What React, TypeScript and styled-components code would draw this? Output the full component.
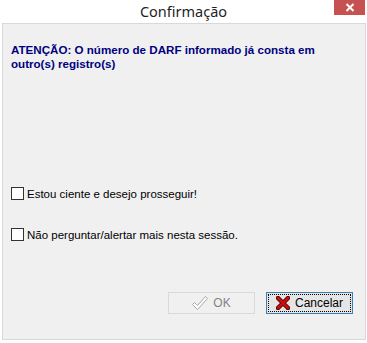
import React from "react"
import styled, { createGlobalStyle } from "styled-components"

const GlobalStyle = createGlobalStyle`
  html, body {
    margin: 0;
    padding: 0;
    background: #ffffff;
  }
  body {
    font-family: "Liberation Sans", Arial, sans-serif;
  }
`

const StyledWindow = styled.div`
  width: 367px;
  height: 343px;
  display: flex;
  flex-direction: column;
  background: #ffffff;
  box-sizing: border-box;
`

const StyledTitleBar = styled.div`
  display: grid;
  grid-template-columns: 1fr auto 1fr;
  height: 23px;
  flex-shrink: 0;
`

const StyledTitle = styled.div`
  grid-column: 2;
  font-family: "Noto Sans", "Open Sans", sans-serif;
  font-size: 14.5px;
  color: #1f1f1f;
  line-height: 23px;
`

const StyledClose = styled.div`
  grid-column: 3;
  justify-self: end;
  align-self: start;
  width: 31px;
  height: 15px;
  margin-right: 2px;
  background: #c75050;
  display: flex;
  align-items: center;
  justify-content: center;
`

const StyledClient = styled.div`
  flex: 1;
  margin: 0 1px 3px 2px;
  border: 1px solid #d9d9d9;
  background: #f0f0f0;
  display: flex;
  flex-direction: column;
  padding: 19px 12px 0 8px;
`

const StyledMessage = styled.div`
  color: #000080;
  font-weight: bold;
  font-size: 11.6px;
  line-height: 14px;
  height: 28px;
`

const StyledChecks = styled.div`
  display: flex;
  flex-direction: column;
  gap: 28px;
  margin-top: 116px;
`

const StyledCheckRow = styled.label`
  display: flex;
  align-items: center;
  height: 13px;
  font-size: 11.5px;
  color: #000000;
  gap: 3px;
`

const StyledBox = styled.span`
  width: 13px;
  height: 13px;
  box-sizing: border-box;
  border: 1px solid #333333;
  background: #ffffff;
  flex-shrink: 0;
`

const StyledButtons = styled.div`
  display: flex;
  justify-content: flex-end;
  gap: 11px;
  margin-top: 51px;
`

const StyledButton = styled.div<{ $focused?: boolean; $disabled?: boolean }>`
  width: 87px;
  height: 22px;
  box-sizing: border-box;
  border: 1px solid ${p => (p.$focused ? "#3c7fb1" : p.$disabled ? "#d9d9d9" : "#acacac")};
  background: ${p => (p.$disabled ? "#f0f0f0" : "#e5e5e5")};
  padding: 1px;
  display: flex;
`

const StyledButtonInner = styled.div<{ $focused?: boolean; $disabled?: boolean }>`
  flex: 1;
  display: flex;
  align-items: center;
  justify-content: center;
  gap: 5px;
  border: 1px dotted ${p => (p.$focused ? "#000000" : "transparent")};
  font-size: 12px;
  color: ${p => (p.$disabled ? "#838383" : "#000000")};
`

const CloseIcon = () => (
  <svg width="10" height="9" viewBox="0 0 10 9">
    <path d="M1.5 1 L8.5 8 M8.5 1 L1.5 8" stroke="#ffffff" strokeWidth="2" />
  </svg>
)

const CheckIcon = () => (
  <svg width="16" height="16" viewBox="0 0 16 16">
    <path
      d="M0.5 9.5 L2.5 7.5 L5.5 10.5 L13.5 1.5 L15.5 3.5 L5.5 14.5 Z"
      fill="#ffffff"
      stroke="#a6a6a6"
      strokeWidth="1"
      strokeLinejoin="round"
    />
  </svg>
)

const CrossIcon = () => (
  <svg width="14" height="14" viewBox="0 0 14 14">
    <path d="M2 2 L12 12 M12 2 L2 12" stroke="#5a0000" strokeWidth="4.5" strokeLinecap="round" />
    <path d="M2 2 L12 12 M12 2 L2 12" stroke="#c81010" strokeWidth="2.5" strokeLinecap="round" />
  </svg>
)

const App = () => {
  return (
    <StyledWindow>
      <GlobalStyle />
      <StyledTitleBar>
        <StyledTitle>Confirmação</StyledTitle>
        <StyledClose>
          <CloseIcon />
        </StyledClose>
      </StyledTitleBar>
      <StyledClient>
        <StyledMessage>
          ATENÇÃO: O número de DARF informado já consta em
          <br />
          outro(s) registro(s)
        </StyledMessage>
        <StyledChecks>
          <StyledCheckRow>
            <StyledBox />
            Estou ciente e desejo prosseguir!
          </StyledCheckRow>
          <StyledCheckRow>
            <StyledBox />
            Não perguntar/alertar mais nesta sessão.
          </StyledCheckRow>
        </StyledChecks>
        <StyledButtons>
          <StyledButton $disabled>
            <StyledButtonInner $disabled>
              <CheckIcon />
              OK
            </StyledButtonInner>
          </StyledButton>
          <StyledButton $focused>
            <StyledButtonInner $focused>
              <CrossIcon />
              Cancelar
            </StyledButtonInner>
          </StyledButton>
        </StyledButtons>
      </StyledClient>
    </StyledWindow>
  )
}

export default App
